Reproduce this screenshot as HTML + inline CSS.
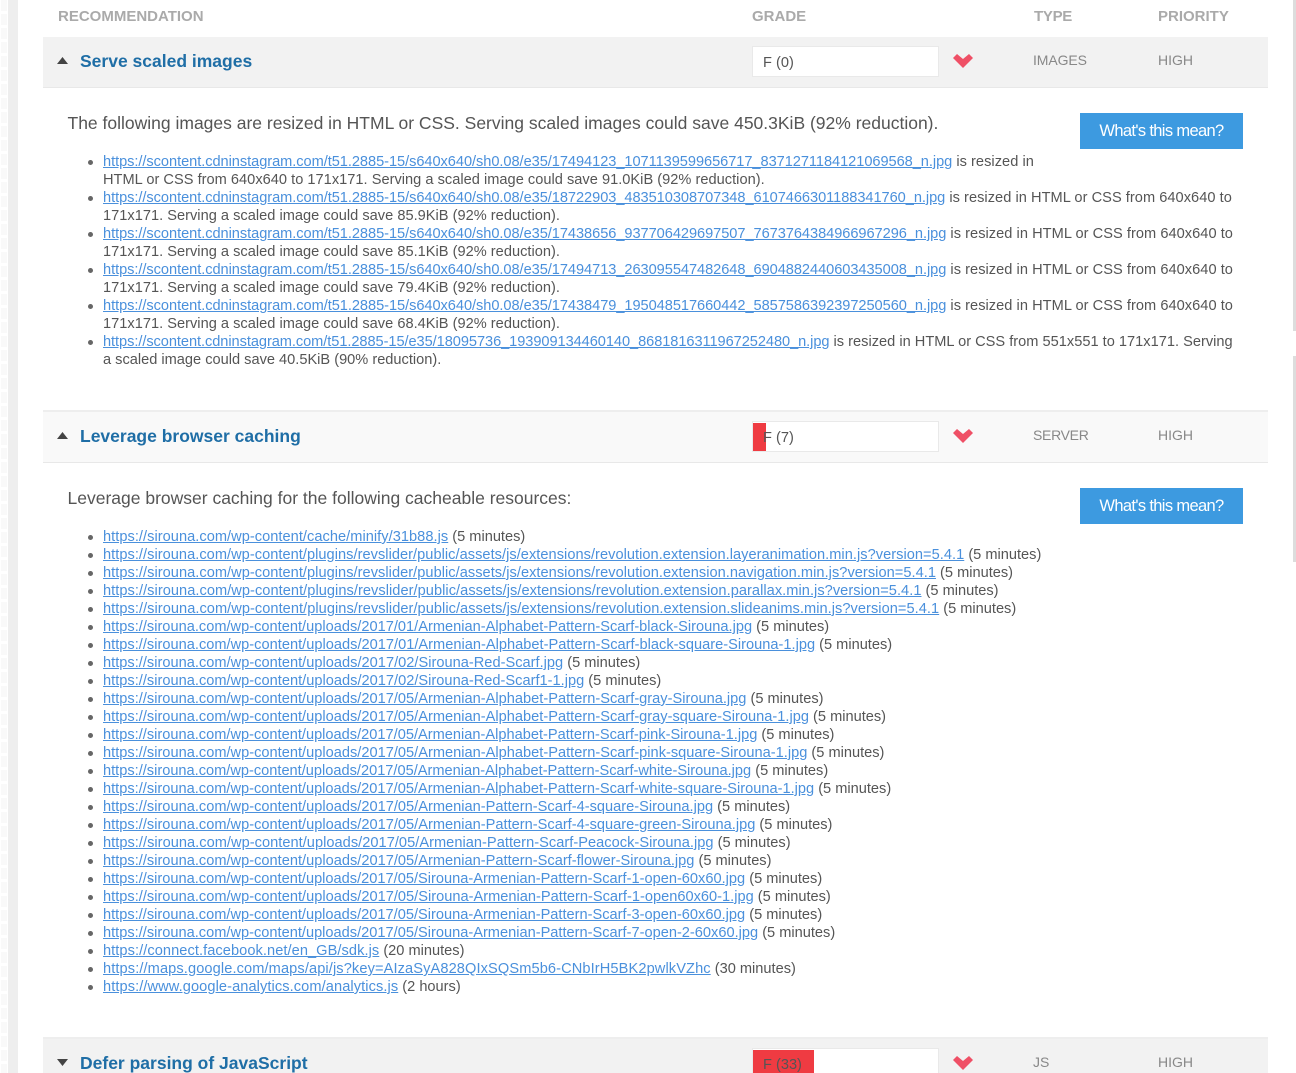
<!DOCTYPE html>
<html><head><meta charset="utf-8"><style>
html,body{margin:0;padding:0;background:#fff;overflow:hidden;width:1296px;height:1073px}
#w{width:1296px;height:1073px;position:relative;overflow:hidden;font-family:"Liberation Sans",Arial,sans-serif;color:#555}
.a{position:absolute;white-space:nowrap}
.stripe{position:absolute;left:8px;top:0;width:10px;height:1073px;background:#eee}
.dots{position:absolute;left:1px;top:0;width:6px;height:1073px;background:repeating-linear-gradient(#f9f9f9 0 11px,#fff 11px 14px)}
.sb{position:absolute;left:1293px;width:3px;background:#ddd}
.th{font-weight:bold;font-size:15px;color:#aaa;line-height:18px;top:8px}
.row{position:absolute;left:43px;width:1225px;box-sizing:border-box}
.title{font-weight:bold;font-size:17.5px;color:#1f6ea6;line-height:24px;left:80px}
.box{position:absolute;left:752px;width:187px;height:31px;box-sizing:border-box;background:#fff;border:1px solid #e9e9e9;overflow:hidden}
.bar{position:absolute;left:0;top:1px;bottom:0;background:#ef3b42}
.gt{position:absolute;left:763px;font-size:14.6px;line-height:18px;color:#555;margin-top:1px}
.cell{font-size:14px;line-height:18px;color:#888}
.btn{position:absolute;left:1080px;width:163px;height:36px;background:#3d9ae0;color:#fff;font-size:16.5px;line-height:36px;text-align:center;letter-spacing:-.65px}
.intro{font-size:17.5px;line-height:24px;left:67.5px;color:#555}
.l{position:absolute;left:103px;font-size:14.6px;line-height:18px;white-space:nowrap;color:#555;margin-top:1px}
.l a{color:#4a90dc;text-decoration:underline}
.s{letter-spacing:.04px}
.s a{letter-spacing:-.047px}
.l::before{content:"";position:absolute;left:-15px;top:7px;width:5px;height:5px;border-radius:50%;background:#666}
.l.n::before{display:none}
</style></head><body><div id="w">
<div class="dots"></div><div class="stripe"></div>
<div class="sb" style="top:0;height:331px"></div>
<div class="sb" style="top:356px;height:206px"></div>

<div class="a th" style="left:58px">RECOMMENDATION</div>
<div class="a th" style="left:752px">GRADE</div>
<div class="a th" style="left:1034px;letter-spacing:-.3px">TYPE</div>
<div class="a th" style="left:1158px">PRIORITY</div>

<div class="row" style="top:37px;height:51px;background:#f2f2f2;border-bottom:1px solid #e8e8e8"></div>
<svg class="a" style="left:57px;top:57px" width="11" height="7"><path d="M5.5 0L11 7H0z" fill="#444"/></svg>
<div class="a title" style="top:49px">Serve scaled images</div>
<div class="box" style="top:46px"></div>
<div class="gt" style="top:53px">F (0)</div>
<svg class="a" style="left:953px;top:54px" width="20" height="14"><path d="M0 4L4 0L10 5L16 0L20 4L10 14z" fill="#ef5066"/></svg>
<div class="a cell" style="left:1033px;top:51px;letter-spacing:-.1px">IMAGES</div>
<div class="a cell" style="left:1158px;top:51px">HIGH</div>
<div class="a intro" style="top:111px">The following images are resized in HTML or CSS. Serving scaled images could save 450.3KiB (92% reduction).</div>
<div class="btn" style="top:113px">What's this mean?</div>

<div class="l s" style="top:152px"><a>https://scontent.cdninstagram.com/t51.2885-15/s640x640/sh0.08/e35/17494123_1071139599656717_8371271184121069568_n.jpg</a> is resized in</div>
<div class="l n" style="top:170px;letter-spacing:.02px">HTML or CSS from 640x640 to 171x171. Serving a scaled image could save 91.0KiB (92% reduction).</div>
<div class="l s" style="top:188px"><a>https://scontent.cdninstagram.com/t51.2885-15/s640x640/sh0.08/e35/18722903_483510308707348_6107466301188341760_n.jpg</a> is resized in HTML or CSS from 640x640 to</div>
<div class="l n" style="top:206px;letter-spacing:.015px">171x171. Serving a scaled image could save 85.9KiB (92% reduction).</div>
<div class="l s" style="top:224px"><a>https://scontent.cdninstagram.com/t51.2885-15/s640x640/sh0.08/e35/17438656_937706429697507_7673764384966967296_n.jpg</a> is resized in HTML or CSS from 640x640 to</div>
<div class="l n" style="top:242px;letter-spacing:.015px">171x171. Serving a scaled image could save 85.1KiB (92% reduction).</div>
<div class="l s" style="top:260px"><a>https://scontent.cdninstagram.com/t51.2885-15/s640x640/sh0.08/e35/17494713_263095547482648_6904882440603435008_n.jpg</a> is resized in HTML or CSS from 640x640 to</div>
<div class="l n" style="top:278px;letter-spacing:.015px">171x171. Serving a scaled image could save 79.4KiB (92% reduction).</div>
<div class="l s" style="top:296px"><a>https://scontent.cdninstagram.com/t51.2885-15/s640x640/sh0.08/e35/17438479_195048517660442_5857586392397250560_n.jpg</a> is resized in HTML or CSS from 640x640 to</div>
<div class="l n" style="top:314px;letter-spacing:.015px">171x171. Serving a scaled image could save 68.4KiB (92% reduction).</div>
<div class="l s" style="top:332px;letter-spacing:.01px"><a style="letter-spacing:-.06px">https://scontent.cdninstagram.com/t51.2885-15/e35/18095736_193909134460140_8681816311967252480_n.jpg</a> is resized in HTML or CSS from 551x551 to 171x171. Serving</div>
<div class="l n" style="top:350px">a scaled image could save 40.5KiB (90% reduction).</div>

<div class="row" style="top:410px;height:53px;background:#f9f9f9;border-top:2px solid #eee;border-bottom:1px solid #e8e8e8"></div>
<svg class="a" style="left:57px;top:432px" width="11" height="7"><path d="M5.5 0L11 7H0z" fill="#444"/></svg>
<div class="a title" style="top:424px">Leverage browser caching</div>
<div class="box" style="top:421px"><div class="bar" style="width:13px"></div></div>
<div class="gt" style="top:428px">F (7)</div>
<svg class="a" style="left:953px;top:429px" width="20" height="14"><path d="M0 4L4 0L10 5L16 0L20 4L10 14z" fill="#ef5066"/></svg>
<div class="a cell" style="left:1033px;top:426px;letter-spacing:-.3px">SERVER</div>
<div class="a cell" style="left:1158px;top:426px">HIGH</div>
<div class="a intro" style="top:486px">Leverage browser caching for the following cacheable resources:</div>
<div class="btn" style="top:488px">What's this mean?</div>

<div class="l" style="top:527px"><a style="letter-spacing:.04px">https://sirouna.com/wp-content/cache/minify/31b88.js</a> (5 minutes)</div>
<div class="l" style="top:545px"><a style="letter-spacing:.038px">https://sirouna.com/wp-content/plugins/revslider/public/assets/js/extensions/revolution.extension.layeranimation.min.js?version=5.4.1</a> (5 minutes)</div>
<div class="l" style="top:563px"><a style="letter-spacing:.04px">https://sirouna.com/wp-content/plugins/revslider/public/assets/js/extensions/revolution.extension.navigation.min.js?version=5.4.1</a> (5 minutes)</div>
<div class="l" style="top:581px"><a style="letter-spacing:.048px">https://sirouna.com/wp-content/plugins/revslider/public/assets/js/extensions/revolution.extension.parallax.min.js?version=5.4.1</a> (5 minutes)</div>
<div class="l" style="top:599px"><a style="letter-spacing:.046px">https://sirouna.com/wp-content/plugins/revslider/public/assets/js/extensions/revolution.extension.slideanims.min.js?version=5.4.1</a> (5 minutes)</div>
<div class="l" style="top:617px"><a style="letter-spacing:.01px">https://sirouna.com/wp-content/uploads/2017/01/Armenian-Alphabet-Pattern-Scarf-black-Sirouna.jpg</a> (5 minutes)</div>
<div class="l" style="top:635px"><a style="letter-spacing:.014px">https://sirouna.com/wp-content/uploads/2017/01/Armenian-Alphabet-Pattern-Scarf-black-square-Sirouna-1.jpg</a> (5 minutes)</div>
<div class="l" style="top:653px"><a style="letter-spacing:.015px">https://sirouna.com/wp-content/uploads/2017/02/Sirouna-Red-Scarf.jpg</a> (5 minutes)</div>
<div class="l" style="top:671px"><a style="letter-spacing:.014px">https://sirouna.com/wp-content/uploads/2017/02/Sirouna-Red-Scarf1-1.jpg</a> (5 minutes)</div>
<div class="l" style="top:689px"><a style="letter-spacing:.01px">https://sirouna.com/wp-content/uploads/2017/05/Armenian-Alphabet-Pattern-Scarf-gray-Sirouna.jpg</a> (5 minutes)</div>
<div class="l" style="top:707px"><a style="letter-spacing:.01px">https://sirouna.com/wp-content/uploads/2017/05/Armenian-Alphabet-Pattern-Scarf-gray-square-Sirouna-1.jpg</a> (5 minutes)</div>
<div class="l" style="top:725px"><a style="letter-spacing:.005px">https://sirouna.com/wp-content/uploads/2017/05/Armenian-Alphabet-Pattern-Scarf-pink-Sirouna-1.jpg</a> (5 minutes)</div>
<div class="l" style="top:743px"><a style="letter-spacing:.01px">https://sirouna.com/wp-content/uploads/2017/05/Armenian-Alphabet-Pattern-Scarf-pink-square-Sirouna-1.jpg</a> (5 minutes)</div>
<div class="l" style="top:761px"><a>https://sirouna.com/wp-content/uploads/2017/05/Armenian-Alphabet-Pattern-Scarf-white-Sirouna.jpg</a> (5 minutes)</div>
<div class="l" style="top:779px"><a style="letter-spacing:.005px">https://sirouna.com/wp-content/uploads/2017/05/Armenian-Alphabet-Pattern-Scarf-white-square-Sirouna-1.jpg</a> (5 minutes)</div>
<div class="l" style="top:797px"><a style="letter-spacing:.01px">https://sirouna.com/wp-content/uploads/2017/05/Armenian-Pattern-Scarf-4-square-Sirouna.jpg</a> (5 minutes)</div>
<div class="l" style="top:815px"><a style="letter-spacing:.01px">https://sirouna.com/wp-content/uploads/2017/05/Armenian-Pattern-Scarf-4-square-green-Sirouna.jpg</a> (5 minutes)</div>
<div class="l" style="top:833px"><a style="letter-spacing:.033px">https://sirouna.com/wp-content/uploads/2017/05/Armenian-Pattern-Scarf-Peacock-Sirouna.jpg</a> (5 minutes)</div>
<div class="l" style="top:851px"><a style="letter-spacing:.01px">https://sirouna.com/wp-content/uploads/2017/05/Armenian-Pattern-Scarf-flower-Sirouna.jpg</a> (5 minutes)</div>
<div class="l" style="top:869px"><a style="letter-spacing:.005px">https://sirouna.com/wp-content/uploads/2017/05/Sirouna-Armenian-Pattern-Scarf-1-open-60x60.jpg</a> (5 minutes)</div>
<div class="l" style="top:887px"><a style="letter-spacing:.01px">https://sirouna.com/wp-content/uploads/2017/05/Sirouna-Armenian-Pattern-Scarf-1-open60x60-1.jpg</a> (5 minutes)</div>
<div class="l" style="top:905px"><a style="letter-spacing:.005px">https://sirouna.com/wp-content/uploads/2017/05/Sirouna-Armenian-Pattern-Scarf-3-open-60x60.jpg</a> (5 minutes)</div>
<div class="l" style="top:923px"><a style="letter-spacing:.005px">https://sirouna.com/wp-content/uploads/2017/05/Sirouna-Armenian-Pattern-Scarf-7-open-2-60x60.jpg</a> (5 minutes)</div>
<div class="l" style="top:941px"><a style="letter-spacing:.07px">https://connect.facebook.net/en_GB/sdk.js</a> (20 minutes)</div>
<div class="l" style="top:959px"><a style="letter-spacing:.11px">https://maps.google.com/maps/api/js?key=AIzaSyA828QIxSQSm5b6-CNbIrH5BK2pwlkVZhc</a> (30 minutes)</div>
<div class="l" style="top:977px"><a style="letter-spacing:.09px">https://www.google-analytics.com/analytics.js</a> (2 hours)</div>

<div class="row" style="top:1037px;height:36px;background:#f2f2f2;border-top:2px solid #eee"></div>
<svg class="a" style="left:57px;top:1059px" width="11" height="7"><path d="M0 0H11L5.5 7z" fill="#444"/></svg>
<div class="a title" style="top:1051px">Defer parsing of JavaScript</div>
<div class="box" style="top:1048px"><div class="bar" style="width:61px"></div></div>
<div class="gt" style="top:1055px">F (33)</div>
<svg class="a" style="left:953px;top:1056px" width="20" height="14"><path d="M0 4L4 0L10 5L16 0L20 4L10 14z" fill="#ef5066"/></svg>
<div class="a cell" style="left:1033px;top:1053px">JS</div>
<div class="a cell" style="left:1158px;top:1053px">HIGH</div>
</div></body></html>
